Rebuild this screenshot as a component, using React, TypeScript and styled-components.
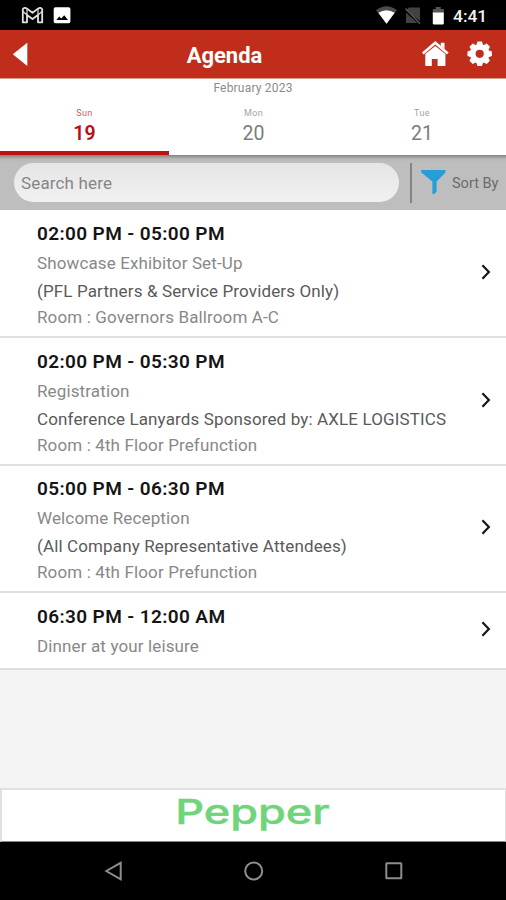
import React from 'react';
import styled, { createGlobalStyle } from 'styled-components';

const GlobalStyle = createGlobalStyle`
  * { box-sizing: border-box; }
  body { margin: 0; background: #f4f4f4; font-family: Roboto, "Liberation Sans", sans-serif; }
`;

const Screen = styled.div`
  width: 506px;
  height: 900px;
  display: flex;
  flex-direction: column;
  overflow: hidden;
  background: #f4f4f4;
`;

const StatusBar = styled.div`
  height: 30px;
  flex: none;
  display: flex;
  align-items: center;
  justify-content: space-between;
  background: #000;
`;

const Clock = styled.span`
  color: #f4f4f4;
  font-size: 17.4px;
  font-weight: 500;
  line-height: 30px;
  width: 53px;
  margin-left: 4px;
  padding: 1px 0 0;
`;

const AppBar = styled.header`
  height: 49px;
  flex: none;
  display: grid;
  grid-template-columns: 43px 1fr 100px;
  align-items: center;
  background: #c02e1b;
  border-bottom: 1px solid #df9a92;
`;

const Title = styled.h1`
  margin: 0;
  padding: 3px 0 0;
  text-align: center;
  color: #fff;
  font-size: 22px;
  line-height: 28px;
  font-weight: 700;
`;

const DateStrip = styled.div`
  height: 76px;
  flex: none;
  background: #fff;
`;

const Month = styled.div`
  height: 19px;
  line-height: 18px;
  text-align: center;
  font-size: 12px;
  letter-spacing: 0.2px;
  color: #8c8c8c;
`;

const Days = styled.div`
  display: grid;
  grid-template-columns: 169px 169px 168px;
  height: 57px;
`;

const Day = styled.div<{ $active?: boolean }>`
  text-align: center;
  padding-top: 9px;
  color: ${p => (p.$active ? '#b80f14' : '#7c7c7c')};
  border-bottom: ${p => (p.$active ? '4px solid #c11212' : '0')};
`;

const Weekday = styled.div`
  font-size: 9px;
  line-height: 12px;
  letter-spacing: 0.4px;
  opacity: 0.7;
`;

const DayNumber = styled.div<{ $active?: boolean }>`
  font-size: 19.5px;
  line-height: 26px;
  padding-top: 2px;
  font-weight: ${p => (p.$active ? 600 : 400)};
`;

const SearchBar = styled.div`
  height: 55px;
  flex: none;
  display: flex;
  align-items: center;
  padding-left: 14px;
  background: linear-gradient(#828282 0, #9e9e9e 2px, #b8b8b8 4px, #bebebe 8px);
`;

const SearchField = styled.div`
  width: 385px;
  height: 39px;
  border-radius: 20px;
  padding-left: 7px;
  line-height: 40px;
  font-size: 17px;
  letter-spacing: 0.15px;
  color: #868686;
  background: linear-gradient(#e5e5e5, #f1f1f1);
`;

const Divider = styled.div`
  width: 2px;
  height: 40px;
  margin: 0 9px 0 11px;
  background: #858585;
`;

const SortLabel = styled.span`
  margin-left: 6px;
  padding-top: 1px;
  font-size: 14.5px;
  color: #6b6b6b;
  white-space: nowrap;
`;

const Session = styled.article<{ $height: number }>`
  height: ${p => p.$height}px;
  flex: none;
  display: flex;
  align-items: center;
  justify-content: space-between;
  padding: 0 15px 0 37px;
  background: #fff;
  border-bottom: 2px solid #e0e0e0;
`;

const SessionBody = styled.div<{ $top: number }>`
  align-self: flex-start;
  padding-top: ${p => p.$top}px;
  white-space: nowrap;
`;

const Time = styled.div`
  height: 30px;
  line-height: 29px;
  font-size: 19px;
  letter-spacing: 0.38px;
  font-weight: 600;
  color: #151515;
`;

const Line = styled.div<{ $dark?: boolean; $height: number }>`
  height: ${p => p.$height}px;
  line-height: 29px;
  font-size: 17px;
  letter-spacing: 0.13px;
  color: ${p => (p.$dark ? '#5a5a5a' : '#888')};
`;

const Spacer = styled.div`
  flex: 1;
`;

const Banner = styled.div`
  height: 54px;
  flex: none;
  background: #fff;
  border: 2px solid #e0e0e0;
  border-width: 2px 1px 1px 2px;
  border-bottom-color: #8a8a8a;
`;

const NavBar = styled.nav`
  height: 58px;
  flex: none;
  background: #000;
`;

const Art = styled.svg`
  display: block;
  flex: none;
  overflow: visible;
`;

const ChevronArt = styled(Art)`
  margin-bottom: 3px;
`;

const sessions = [
  { time: '02:00 PM - 05:00 PM', title: 'Showcase Exhibitor Set-Up', note: '(PFL Partners & Service Providers Only)', room: 'Room : Governors Ballroom A-C', height: 128, top: 9 },
  { time: '02:00 PM - 05:30 PM', title: 'Registration', note: 'Conference Lanyards Sponsored by: AXLE LOGISTICS', room: 'Room : 4th Floor Prefunction', height: 128, top: 9 },
  { time: '05:00 PM - 06:30 PM', title: 'Welcome Reception', note: '(All Company Representative Attendees)', room: 'Room : 4th Floor Prefunction', height: 127, top: 8 },
  { time: '06:30 PM - 12:00 AM', title: 'Dinner at your leisure', height: 77, top: 9 },
];

const NotificationIcons = () => (
  <Art width="80" height="30" viewBox="0 0 80 30">
    <path d="M22.8 9.3V22.3H27V15L32.5 19L38 15V22.3H42.2V9.3Q40.5 6.7 38 8.6L32.5 12.8L27 8.6Q24.5 6.7 22.8 9.3Z" fill="none" stroke="#e2e2e2" strokeWidth="1.8" strokeLinejoin="round" />
    <path d="M27 9v6M38 9v6M23 11.5l4 3.5M42 11.5L38 15" stroke="#dcdcdc" strokeWidth="1.2" />
    <rect x="53.7" y="7.3" width="16.7" height="16" rx="1.8" fill="#fff" />
    <path d="M56.3 20L59.3 16.5L61.2 18.5L64.2 15.2L68 20Z" fill="#000" />
  </Art>
);

const StatusIcons = () => (
  <Art width="74" height="30" viewBox="375 0 74 30">
    <path d="M376 10.2Q386.5 2.5 397 10.2L386.5 23.7Z" fill="#4b4b4b" />
    <path d="M378.4 12.8Q386.5 7.7 394.7 12.8L386.5 23.7Z" fill="#fff" />
    <path d="M409 7.5H420V21L406 10.5ZM406 12.5V23H417.5Z" fill="#424242" />
    <path d="M405.5 8.5L420 23.7" stroke="#555" strokeWidth="1.5" />
    <path d="M435.7 7h5v2h3.1v5.5h-11V9h2.9Z" fill="#555" />
    <path d="M432.8 12.5h11V23.2q0 1.2-1.2 1.2h-8.6q-1.2 0-1.2-1.2Z" fill="#fff" />
  </Art>
);

const BackIcon = () => (
  <Art width="40" height="48" viewBox="0 30 40 48"><path d="M12.8 54.3L27.3 42.8V66Z" fill="#fff" /></Art>
);

const teeth = [0, 45, 90, 135, 180, 225, 270, 315];

const HeaderActions = () => (
  <Art width="100" height="48" viewBox="406 30 100 48">
    <path d="M425.3 54V66H431.8V59H437.6V66H445.4V54L435.3 45.9Z" fill="#fff" />
    <path d="M422.8 53.5L435.3 42.7L447.8 53.5" fill="none" stroke="#fff" strokeWidth="2.6" />
    <path d="M440.8 42.7h3.7v6.2l-3.7-3.1Z" fill="#fff" />
    <g fill="#fff" transform="translate(479.7 53.8)">
      {teeth.map(a => <path key={a} d="M-3.7-8L-2.2-12.2H2.2L3.7-8Z" transform={`rotate(${a})`} />)}
      <circle r="9.6" />
      <circle r="4.1" fill="#c02e1b" />
    </g>
  </Art>
);

const FunnelIcon = () => (
  <Art width="25" height="25" viewBox="0 0 25 25">
    <path d="M.3 0H24.5V2.4L15.6 11.6V21.2Q14.5 24 11.4 24V11.6L.3 2.4Z" fill="#249fd9" />
  </Art>
);

const Chevron = () => (
  <ChevronArt width="10" height="18" viewBox="0 0 10 18">
    <path d="M1.4 2.2L7.9 9L1.4 15.8" fill="none" stroke="#171717" strokeWidth="2.2" />
  </ChevronArt>
);

const PepperLogo = () => (
  <Art width="502" height="51" viewBox="2 790 502 51">
    <text x="175.2" y="824.2" textLength="154.5" lengthAdjust="spacingAndGlyphs" fontFamily="Inter, Roboto, sans-serif" fontSize="33.5" fontWeight="500" fill="#6fd47a" stroke="#6fd47a" strokeWidth=".4">Pepper</text>
  </Art>
);

const NavigationIcons = () => (
  <Art width="506" height="58" viewBox="0 842 506 58" fill="none" stroke="#8d8d8d" strokeWidth="2">
    <path d="M106.3 871L120.7 862.8V879.3Z" />
    <circle cx="253.7" cy="871" r="8.5" />
    <rect x="386.3" y="863.3" width="15" height="15" rx=".5" />
  </Art>
);

export default function App() {
  return (
    <Screen>
      <GlobalStyle />
      <StatusBar>
        <NotificationIcons />
        <Spacer />
        <StatusIcons />
        <Clock>4:41</Clock>
      </StatusBar>
      <AppBar>
        <BackIcon />
        <Title>Agenda</Title>
        <HeaderActions />
      </AppBar>
      <DateStrip>
        <Month>February 2023</Month>
        <Days>
          <Day $active><Weekday>Sun</Weekday><DayNumber $active>19</DayNumber></Day>
          <Day><Weekday>Mon</Weekday><DayNumber>20</DayNumber></Day>
          <Day><Weekday>Tue</Weekday><DayNumber>21</DayNumber></Day>
        </Days>
      </DateStrip>
      <SearchBar>
        <SearchField>Search here</SearchField>
        <Divider />
        <FunnelIcon />
        <SortLabel>Sort By</SortLabel>
      </SearchBar>
      {sessions.map(s => (
        <Session key={s.time} $height={s.height}>
          <SessionBody $top={s.top}>
            <Time>{s.time}</Time>
            <Line $height={28}>{s.title}</Line>
            {s.note && <Line $dark $height={26}>{s.note}</Line>}
            {s.room && <Line $height={28}>{s.room}</Line>}
          </SessionBody>
          <Chevron />
        </Session>
      ))}
      <Spacer />
      <Banner><PepperLogo /></Banner>
      <NavBar><NavigationIcons /></NavBar>
    </Screen>
  );
}
